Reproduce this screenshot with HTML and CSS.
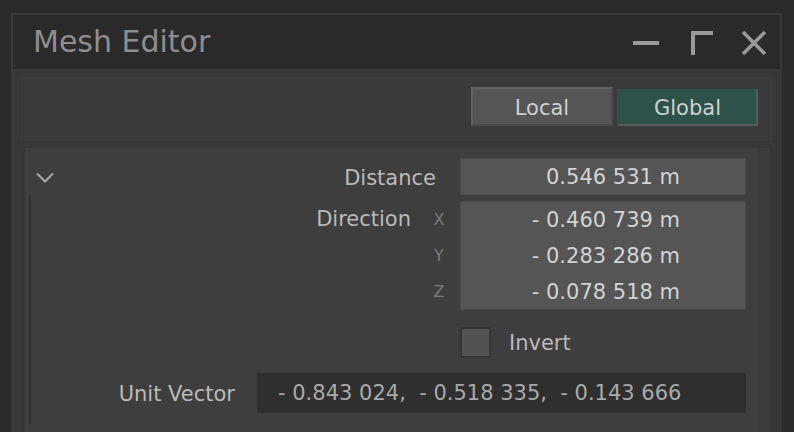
FILE: index.html
```html
<!DOCTYPE html>
<html>
<head>
<meta charset="utf-8">
<link rel="stylesheet" href="styles.css">
</head>
<body>
<div class="window">
  <div class="titlebar">
    <div class="title">Mesh Editor</div>
    <div class="controls">
      <svg class="ic ic-min" width="26" height="26" viewBox="0 0 26 26"><line x1="0" y1="13" x2="26" y2="13" stroke="#9a9a9a" stroke-width="4"/></svg>
      <svg class="ic ic-max" width="26" height="26" viewBox="0 0 26 26"><path d="M4 25 V3 H24" fill="none" stroke="#9a9a9a" stroke-width="4"/></svg>
      <svg class="ic ic-close" width="26" height="26" viewBox="0 0 26 26"><path d="M2 2 L24 24 M24 2 L2 24" fill="none" stroke="#9a9a9a" stroke-width="3.6"/></svg>
    </div>
  </div>
  <div class="wbody">
    <div class="toolbar">
      <div class="btn btn-local">Local</div>
      <div class="btn btn-global">Global</div>
    </div>
    <div class="panel">
      <div class="gutter">
        <svg class="chev" width="20" height="12" viewBox="0 0 20 12"><polyline points="2,1.5 10,9.5 18,1.5" fill="none" stroke="#a8a8a8" stroke-width="2"/></svg>
        <div class="vline"></div>
      </div>
      <div class="form">
        <div class="row row-dist">
          <div class="label">Distance</div>
          <div class="field single">0.546 531 m</div>
        </div>
        <div class="row row-dir">
          <div class="label">Direction</div>
          <div class="axes">
            <div class="axis">X</div>
            <div class="axis">Y</div>
            <div class="axis">Z</div>
          </div>
          <div class="field multi">
            <div class="vrow">- 0.460 739 m</div>
            <div class="vrow">- 0.283 286 m</div>
            <div class="vrow">- 0.078 518 m</div>
          </div>
        </div>
        <div class="row row-inv">
          <div class="invwrap">
            <div class="check"></div>
            <div class="invlabel">Invert</div>
          </div>
        </div>
        <div class="row row-unit">
          <div class="label">Unit Vector</div>
          <div class="ufield">- 0.843 024,&nbsp; - 0.518 335,&nbsp; - 0.143 666</div>
        </div>
      </div>
      <div class="strip"></div>
    </div>
  </div>
</div>
</body>
</html>
```

FILE: styles.css
```css
html, body {
  margin: 0;
  padding: 0;
  background: #2b2b2b;
  width: 794px;
  height: 432px;
  overflow: hidden;
  font-family: "DejaVu Sans", sans-serif;
}

.window {
  margin: 13px 0 0 11px;
  width: 767px;
  border: 2px solid #393939;
  border-bottom: none;
  background: #383838;
}

.titlebar {
  height: 54px;
  background: #2a2a2a;
  display: flex;
  align-items: center;
  justify-content: space-between;
  padding: 0 13px 0 20px;
}

.title {
  font-size: 30px;
  color: #8e8e8e;
  line-height: 1;
  margin-top: -1px;
}

.controls {
  display: flex;
  align-items: center;
  margin-top: 1px;
}

.ic { display: block; }
.ic-min { margin-right: 30px; }
.ic-max { margin-right: 26px; }

.wbody {
  padding: 8px 8px 0 8px;
}

.toolbar {
  box-sizing: border-box;
  height: 63px;
  border: 1px solid #3f3f3f;
  background: #3a3a3a;
  display: flex;
  justify-content: flex-end;
  align-items: flex-start;
  padding: 9px 13px 0 0;
}

.btn {
  box-sizing: border-box;
  font-size: 21px;
  color: #cfcfcf;
  display: flex;
  align-items: center;
  justify-content: center;
}

.btn-local {
  width: 142px;
  height: 39px;
  background: #555555;
  border: 2px solid;
  border-color: #626262 #4a4a4a #4a4a4a #626262;
  padding-top: 3px;
}

.btn-global {
  width: 141px;
  height: 37px;
  margin-top: 2px;
  margin-left: 4px;
  background: #2c5249;
  border: 2px solid;
  border-color: #2c5249 #5a5a5a #5a5a5a #2c5249;
}

.panel {
  margin: 6px 0 0 2px;
  width: 745px;
  height: 300px;
  border: 2px solid #363636;
  border-bottom: none;
  background: #3e3e3e;
  display: flex;
}

.gutter {
  width: 35px;
  display: flex;
  flex-direction: column;
}

.chev {
  display: block;
  margin: 24px 0 0 10px;
}

.vline {
  margin: 11px 0 0 4px;
  width: 2px;
  height: 229px;
  background: #2f2f2f;
}

.form {
  flex: 1;
  padding: 10px 11px 0 0;
  display: flex;
  flex-direction: column;
}

.strip {
  width: 13px;
  background: #3b3b3b;
}

.row {
  display: flex;
}

.label {
  flex: 1;
  text-align: right;
  font-size: 21px;
  color: #bababa;
  white-space: nowrap;
}

.row-dist {
  height: 37px;
  align-items: center;
}

.row-dist .label {
  padding-right: 24px;
  margin-top: 2px;
}

.field {
  box-sizing: border-box;
  width: 286px;
  background: #555555;
  border: 1px solid #4a4a4a;
  color: #d3d3d3;
  font-size: 21px;
  text-align: right;
  padding-right: 65px;
  white-space: nowrap;
}

.single {
  height: 37px;
  line-height: 37px;
}

.row-dir {
  margin-top: 6px;
}

.row-dir .label {
  line-height: 37px;
}

.axes {
  width: 49px;
  display: flex;
  flex-direction: column;
  padding-left: 7px;
  box-sizing: border-box;
}

.axis {
  height: 36px;
  line-height: 37px;
  text-align: center;
  font-size: 16px;
  color: #7a7a7a;
}

.multi {
  height: 109px;
}

.vrow {
  height: 36px;
  line-height: 36px;
}

.row-inv {
  margin-top: 17px;
  justify-content: flex-end;
}

.invwrap {
  width: 286px;
  display: flex;
  align-items: center;
}

.check {
  box-sizing: border-box;
  width: 31px;
  height: 31px;
  background: #525252;
  border: 2px solid #343434;
}

.invlabel {
  margin-left: 18px;
  font-size: 21px;
  color: #bababa;
  margin-top: 1px;
}

.row-unit {
  margin-top: 15px;
  align-items: center;
}

.row-unit .label {
  padding-right: 22px;
  margin-top: 1px;
}

.ufield {
  box-sizing: border-box;
  width: 489px;
  height: 40px;
  line-height: 40px;
  background: #2f2f2f;
  color: #a9a9a9;
  font-size: 21px;
  padding-left: 21px;
  white-space: nowrap;
}
```
